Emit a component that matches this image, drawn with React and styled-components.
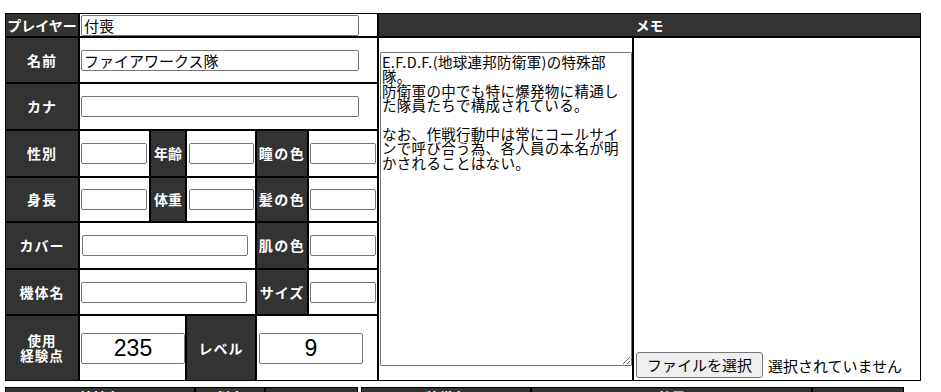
import React from "react";
import styled, { createGlobalStyle } from "styled-components";

const GlobalStyle = createGlobalStyle`
  html, body {
    margin: 0;
    padding: 0;
    overflow: hidden;
    background: #fff;
  }
  body {
    font-family: "Noto Sans CJK JP", "Noto Sans", sans-serif;
    color: #000;
  }
`;

const Page = styled.div`
  padding: 13px 0 0 5px;
`;

const Sheet = styled.div`
  display: grid;
  width: 916px;
  box-sizing: border-box;
  border: 1px solid #000;
  background: #000;
  gap: 2px;
  grid-template-columns: 72px 69px 34px 68px 50px 68px 253px 286px;
  grid-template-rows: 22px 44px 45px 45px 43px 45px 44px 64px;
`;

const Cell = styled.div`
  grid-column: ${(p) => p.$col};
  grid-row: ${(p) => p.$row};
  background: #fff;
  display: flex;
  align-items: ${(p) => p.$valign || "center"};
  justify-content: ${(p) => p.$justify || "flex-start"};
  padding: ${(p) => p.$pad || "0 0 0 1px"};
  box-sizing: border-box;
  min-width: 0;
`;

const Label = styled(Cell)`
  background: #333;
  color: #fff;
  font-weight: 700;
  font-size: 14px;
  line-height: 15px;
  flex-direction: column;
  justify-content: center;
  align-items: center;
  text-align: center;
  white-space: nowrap;
  padding: 0;
  letter-spacing: ${(p) => p.$spacing || "0"};
`;

const LabelLine = styled.span`
  display: block;
  font-size: 13.5px;
  line-height: 15px;
`;

const Field = styled.input`
  width: ${(p) => p.$w}px;
  height: ${(p) => p.$h || 21}px;
  box-sizing: border-box;
  border: 1px solid #767676;
  border-radius: 2px;
  padding: 0 2px;
  margin: 0;
  font-family: "Noto Sans CJK JP", sans-serif;
  font-size: 15px;
  color: #000;
  background: #fff;
  outline: none;
`;

const NumberField = styled(Field)`
  font-family: "Liberation Sans", Arial, sans-serif;
  font-size: 23px;
  text-align: center;
`;

const Memo = styled.textarea`
  width: 252px;
  height: 314px;
  box-sizing: border-box;
  border: 1px solid #767676;
  border-radius: 1px;
  padding: 2px 11px 2px 1px;
  margin: 0;
  font-family: "Noto Sans CJK JP", sans-serif;
  font-size: 14.5px;
  letter-spacing: 0.3px;
  line-height: 14.4px;
  color: #000;
  overflow: hidden;
  outline: none;
`;

const FileRow = styled.div`
  display: flex;
  align-items: center;
  gap: 5px;
  font-size: 15px;
  white-space: nowrap;
`;

const FileButton = styled.button`
  height: 26px;
  padding: 0 10px;
  border: 1px solid #767676;
  border-radius: 3px;
  background: #efefef;
  font-family: "Noto Sans CJK JP", sans-serif;
  font-size: 15px;
  color: #000;
  line-height: 22px;
`;

const Lower = styled.div`
  display: flex;
  gap: 3px;
  margin-top: 6px;
`;

const SubTable = styled.div`
  display: grid;
  grid-template-columns: ${(p) => p.$cols};
  box-sizing: border-box;
  border: 1px solid #000;
  background: #000;
  gap: 2px;
`;

const SubHead = styled.div`
  background: #333;
  color: #fff;
  font-weight: 700;
  font-size: 14px;
  line-height: 16px;
  height: 24px;
  padding-top: 1px;
  box-sizing: border-box;
  text-align: center;
`;

const memoText =
  "E.F.D.F.(地球連邦防衛軍)の特殊部隊。\n防衛軍の中でも特に爆発物に精通した隊員たちで構成されている。\n\nなお、作戦行動中は常にコールサインで呼び合う為、各人員の本名が明かされることはない。";

export default function App() {
  return (
    <Page>
      <GlobalStyle />
      <Sheet>
        <Label $col="1" $row="1">プレイヤー</Label>
        <Cell $col="2 / 7" $row="1">
          <Field $w={278} $h={21} defaultValue="付喪" />
        </Cell>
        <Label $col="7 / 9" $row="1">メモ</Label>

        <Label $col="1" $row="2" $spacing="1px">名前</Label>
        <Cell $col="2 / 7" $row="2">
          <Field $w={278} defaultValue="ファイアワークス隊" />
        </Cell>

        <Label $col="1" $row="3" $spacing="1px">カナ</Label>
        <Cell $col="2 / 7" $row="3">
          <Field $w={278} />
        </Cell>

        <Label $col="1" $row="4" $spacing="1px">性別</Label>
        <Cell $col="2" $row="4">
          <Field $w={66} />
        </Cell>
        <Label $col="3" $row="4">年齢</Label>
        <Cell $col="4" $row="4" $pad="0 0 0 2px">
          <Field $w={65} />
        </Cell>
        <Label $col="5" $row="4" $spacing="1.5px">瞳の色</Label>
        <Cell $col="6" $row="4">
          <Field $w={66} />
        </Cell>

        <Label $col="1" $row="5" $spacing="1px">身長</Label>
        <Cell $col="2" $row="5">
          <Field $w={66} />
        </Cell>
        <Label $col="3" $row="5">体重</Label>
        <Cell $col="4" $row="5" $pad="0 0 0 2px">
          <Field $w={65} />
        </Cell>
        <Label $col="5" $row="5" $spacing="1.5px">髪の色</Label>
        <Cell $col="6" $row="5">
          <Field $w={66} />
        </Cell>

        <Label $col="1" $row="6" $spacing="1px">カバー</Label>
        <Cell $col="2 / 5" $row="6" $pad="0 0 0 2px">
          <Field $w={166} />
        </Cell>
        <Label $col="5" $row="6" $spacing="1.5px">肌の色</Label>
        <Cell $col="6" $row="6">
          <Field $w={66} />
        </Cell>

        <Label $col="1" $row="7" $spacing="1px">機体名</Label>
        <Cell $col="2 / 5" $row="7">
          <Field $w={166} />
        </Cell>
        <Label $col="5" $row="7" $spacing="1px">サイズ</Label>
        <Cell $col="6" $row="7">
          <Field $w={66} />
        </Cell>

        <Label $col="1" $row="8" $spacing="1px">
          <LabelLine>使用</LabelLine>
          <LabelLine>経験点</LabelLine>
        </Label>
        <Cell $col="2 / 4" $row="8">
          <NumberField $w={104} $h={31} defaultValue="235" />
        </Cell>
        <Label $col="4" $row="8" $spacing="1px">レベル</Label>
        <Cell $col="5 / 7" $row="8" $pad="0 0 0 2px">
          <NumberField $w={104} $h={31} defaultValue="9" />
        </Cell>

        <Cell $col="7" $row="2 / 9">
          <Memo defaultValue={memoText} />
        </Cell>
        <Cell $col="8" $row="2 / 9" $valign="flex-end" $pad="0 0 2px 2px">
          <FileRow>
            <FileButton type="button">ファイルを選択</FileButton>
            <span>選択されていません</span>
          </FileRow>
        </Cell>
      </Sheet>

      <Lower>
        <SubTable $cols="188px 68px 91px">
          <SubHead>特技名</SubHead>
          <SubHead>判定</SubHead>
          <SubHead></SubHead>
        </SubTable>
        <SubTable $cols="168px 279px 90px">
          <SubHead>装備名</SubHead>
          <SubHead>効果</SubHead>
          <SubHead></SubHead>
        </SubTable>
      </Lower>
    </Page>
  );
}
